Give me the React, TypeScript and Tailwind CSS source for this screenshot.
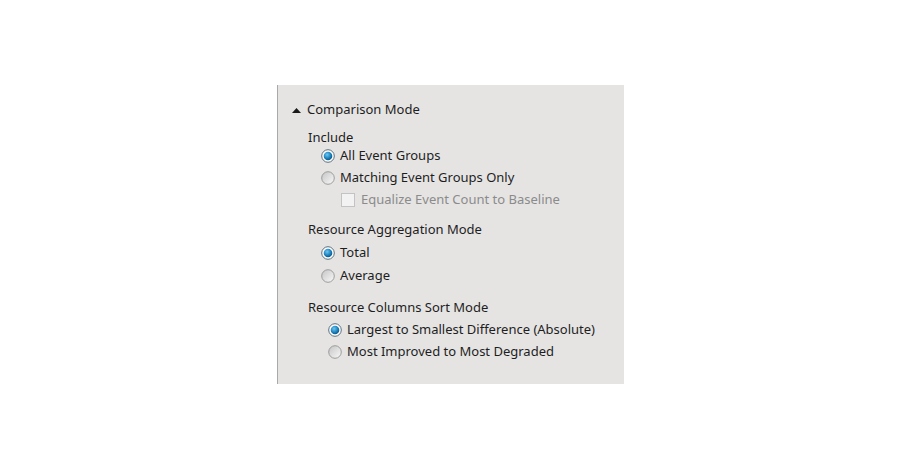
import React from "react";

function Radio({ checked }: { checked?: boolean }) {
  if (checked) {
    return (
      <svg width="14" height="14" viewBox="0 0 14 14" className="shrink-0">
        <defs>
          <radialGradient id="rb" cx="0.4" cy="0.35" r="0.7">
            <stop offset="0" stopColor="#6fc6f0" />
            <stop offset="0.6" stopColor="#1b82bf" />
            <stop offset="1" stopColor="#0c4f7c" />
          </radialGradient>
        </defs>
        <circle cx="7" cy="7" r="6.3" fill="#ffffff" stroke="#5a6f7e" strokeWidth="1" />
        <circle cx="7" cy="7" r="4.3" fill="url(#rb)" />
      </svg>
    );
  }
  return (
    <svg width="14" height="14" viewBox="0 0 14 14" className="shrink-0">
      <defs>
        <linearGradient id="ru" x1="0" y1="0" x2="1" y2="1">
          <stop offset="0" stopColor="#c4c4c4" />
          <stop offset="1" stopColor="#fafafa" />
        </linearGradient>
      </defs>
      <circle cx="7" cy="7" r="6.3" fill="url(#ru)" stroke="#9c9c9c" strokeWidth="1" />
    </svg>
  );
}

function Row({
  children,
  className,
}: {
  children: React.ReactNode;
  className: string;
}) {
  return <div className={"flex items-center h-[18px] " + className}>{children}</div>;
}

export default function App() {
  return (
    <div
      className="w-[900px] h-[467px] bg-white pt-[85px] pl-[277px] text-[13px] text-[#1e1e1e]"
      style={{ fontFamily: '"Noto Sans", "Open Sans", sans-serif' }}
    >
      <div className="w-[347px] h-[299px] bg-[#e5e4e3] border-l border-[#a9a9a9] flex flex-col">
        <Row className="mt-[16px] pl-[14px] gap-[6px]">
          <svg width="9" height="5" viewBox="0 0 9 5" className="shrink-0">
            <polygon points="0,5 4.5,0 9,5" fill="#1a1a1a" />
          </svg>
          <span>Comparison Mode</span>
        </Row>
        <Row className="mt-[10px] pl-[30px]">Include</Row>
        <Row className="mt-0 pl-[43px] gap-[5px]">
          <Radio checked />
          <span>All Event Groups</span>
        </Row>
        <Row className="mt-[4px] pl-[43px] gap-[5px]">
          <Radio />
          <span>Matching Event Groups Only</span>
        </Row>
        <Row className="mt-[4px] pl-[63px] gap-[6px] text-[#8b8b8b]">
          <span className="w-[14px] h-[14px] border border-[#c3c3c3] bg-[#f2f2f2] shrink-0" />
          <span>Equalize Event Count to Baseline</span>
        </Row>
        <Row className="mt-[12px] pl-[30px]">Resource Aggregation Mode</Row>
        <Row className="mt-[5px] pl-[43px] gap-[5px]">
          <Radio checked />
          <span>Total</span>
        </Row>
        <Row className="mt-[5px] pl-[43px] gap-[5px]">
          <Radio />
          <span>Average</span>
        </Row>
        <Row className="mt-[14px] pl-[30px]">Resource Columns Sort Mode</Row>
        <Row className="mt-[4px] pl-[50px] gap-[5px]">
          <Radio checked />
          <span>Largest to Smallest Difference (Absolute)</span>
        </Row>
        <Row className="mt-[4px] pl-[50px] gap-[5px]">
          <Radio />
          <span>Most Improved to Most Degraded</span>
        </Row>
      </div>
    </div>
  );
}
